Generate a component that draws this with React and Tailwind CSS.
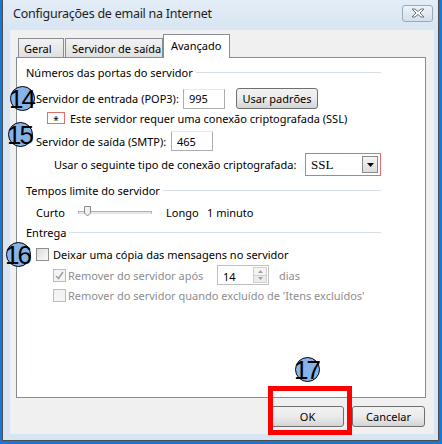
import React from "react";

const font = { fontFamily: '"Noto Sans", "Open Sans", sans-serif' };

const Badge = ({ n, className }) => (
    <div
        className={`absolute w-[25px] h-[25px] rounded-full bg-[#86b4ea] border border-black flex items-center justify-center text-[26px] leading-none text-black tracking-[-2px] ${className}`}
        style={{ fontFamily: '"Liberation Sans", Arial, sans-serif' }}
    >
        <span className="mr-[2px]">{n}</span>
    </div>
);

const Box = ({ checked, disabled }) => (
    <div
        className={`w-[13px] h-[13px] shrink-0 border flex items-center justify-center ${disabled ? "border-[#bcbcbc] bg-[#f4f4f4]" : "border-[#8f8f8f] bg-gradient-to-br from-[#dcdcdc] to-[#fafafa]"}`}
    >
        {checked && (
            <svg width="9" height="9" viewBox="0 0 9 9">
                <path d="M1 5 L3.5 7.5 L8 1" fill="none" stroke="#a0a0a0" strokeWidth="1.6" />
            </svg>
        )}
    </div>
);

const GroupHeader = ({ label, className }) => (
    <div className={`flex items-center h-[16px] pl-[9px] w-[364px] ${className}`}>
        <span className="text-black whitespace-nowrap">{label}</span>
        <div className="flex-1 h-px bg-[#d5dfe5] ml-[3px]" />
    </div>
);

const WinButton = ({ children, className }) => (
    <div
        className={`h-[21px] shrink-0 border border-[#707070] rounded-[3px] bg-gradient-to-b from-[#f2f2f2] via-[#ebebeb] to-[#d4d4d4] flex items-center justify-center text-black ${className}`}
    >
        {children}
    </div>
);

export default function App() {
    return (
        <div className="w-[442px] h-[444px] bg-[#1a78d4] overflow-hidden relative text-[11px] leading-none whitespace-nowrap" style={font}>
            <div className="ml-[2px] w-[437px] h-[441px] border-x border-b border-[#4d4d4d] bg-[#d8e5f2] flex flex-col">
                {/* Title bar */}
                <div className="h-[30px] flex items-center justify-between pl-[10px] pr-[5px] bg-gradient-to-b from-[#e3edf7] to-[#d8e5f2]">
                    <span className="text-[12.5px] tracking-[-0.25px] text-[#1e1e1e] mt-[-1px]">Configurações de email na Internet</span>
                    <div className="w-[31px] h-[17px] mb-[4px] border border-[#9aa8b8] rounded-[3px] bg-gradient-to-b from-[#eef3f8] to-[#d4dfeb] flex items-center justify-center">
                        <svg width="14" height="10" viewBox="0 0 14 10">
                            <path d="M1 1 L4 1 L7 3.5 L10 1 L13 1 L9 5 L13 9 L10 9 L7 6.5 L4 9 L1 9 L5 5 Z" fill="#fff" stroke="#6b7380" strokeWidth="1" strokeLinejoin="round" />
                        </svg>
                    </div>
                </div>

                {/* Body */}
                <div className="ml-[7px] mr-[4px] h-[404px] bg-[#f0f0f0] flex flex-col pl-[6px] pr-[7px] pt-[3px]">
                    {/* Tabs */}
                    <div className="flex items-end h-[24px] pl-[2px]">
                        <div className="h-[19px] px-[5px] border border-b-0 border-[#898c95] bg-gradient-to-b from-[#f2f2f2] to-[#e0e0e0] flex items-center text-black w-[46px]">Geral</div>
                        <div className="h-[19px] ml-[1px] px-[6px] border border-b-0 border-[#898c95] bg-gradient-to-b from-[#f2f2f2] to-[#e0e0e0] flex items-center text-black w-[98px]">Servidor de saída</div>
                        <div className="h-[24px] mb-[-1px] relative z-10 px-[7px] border border-b-0 border-[#898c95] bg-white flex items-center text-black w-[67px] pb-[3px]">Avançado</div>
                    </div>

                    {/* Panel */}
                    <div className="relative w-[410px] h-[341px] border border-[#898c95] bg-white flex flex-col pt-[6px]">
                        <GroupHeader label="Números das portas do servidor" />

                        <div className="flex items-center h-[21px] mt-[8px] pl-[19px]">
                            <span className="text-black w-[147px]">Servidor de entrada (POP3):</span>
                            <div className="w-[42px] h-[20px] border border-[#abadb3] border-t-[#e3e9ef] flex items-center pl-[5px] text-black">995</div>
                            <WinButton className="ml-[11px] w-[82px]">Usar padrões</WinButton>
                        </div>

                        <div className="flex items-center h-[12px] mt-[3px] pl-[30px]">
                            <div className="w-[18px] h-[12px] border border-[#e06f6f] flex items-center justify-center text-[10px] text-black pt-[3px]">*</div>
                            <span className="ml-[5px] text-black">Este servidor requer uma conexão criptografada (SSL)</span>
                        </div>

                        <div className="flex items-center h-[20px] mt-[7px] pl-[19px]">
                            <span className="text-black w-[135px]">Servidor de saída (SMTP):</span>
                            <div className="w-[42px] h-[20px] border border-[#abadb3] border-t-[#e3e9ef] flex items-center pl-[5px] text-black">465</div>
                        </div>

                        <div className="flex items-center h-[23px] mt-[2px] pl-[37px]">
                            <span className="text-black w-[251px]">Usar o seguinte tipo de conexão criptografada:</span>
                            <div className="w-[76px] h-[23px] border-[1.5px] border-[#e06f6f] flex items-center justify-between pl-[5px] pr-[2px]">
                                <span className="text-[13px] text-black" style={{ fontFamily: '"Liberation Serif", serif' }}>SSL</span>
                                <div className="w-[16px] h-[17px] border border-[#8a8a8a] bg-gradient-to-b from-[#f4f4f4] to-[#dcdcdc] flex items-center justify-center">
                                    <svg width="7" height="4" viewBox="0 0 7 4"><path d="M0 0 L7 0 L3.5 4 Z" fill="#000" /></svg>
                                </div>
                            </div>
                        </div>

                        <GroupHeader label="Tempos limite do servidor" className="mt-[6px]" />

                        <div className="flex items-center h-[16px] mt-[6px] pl-[19px]">
                            <span className="text-black w-[42px]">Curto</span>
                            <div className="relative w-[74px] h-[12px] flex items-center">
                                <div className="w-full h-[3px] border border-[#b0b0b0] border-b-[#e6e6e6] bg-[#e7eaea]" />
                                <svg className="absolute left-[6px] top-0" width="7" height="11" viewBox="0 0 7 11">
                                    <path d="M0.5 0.5 H6.5 V7 L3.5 10 L0.5 7 Z" fill="#f0f0f0" stroke="#8a8a8a" />
                                </svg>
                            </div>
                            <span className="ml-[14px] w-[41px] text-black">Longo</span>
                            <span className="text-black">1 minuto</span>
                        </div>

                        <GroupHeader label="Entrega" className="mt-[4px]" />

                        <div className="flex items-center h-[16px] mt-[6px] pl-[19px]">
                            <Box />
                            <span className="ml-[4px] text-black">Deixar uma cópia das mensagens no servidor</span>
                        </div>

                        <div className="flex items-center h-[20px] mt-[3px] pl-[36px]">
                            <Box checked disabled />
                            <span className="ml-[2px] text-[#8d8d8d] w-[149px]">Remover do servidor após</span>
                            <div className="w-[52px] h-[20px] border border-[#c0c0c0] flex items-center justify-between pl-[5px] pr-[1px]">
                                <span className="text-black mt-[2px]">14</span>
                                <div className="flex flex-col w-[14px] h-[16px] border border-[#d0d0d0]">
                                    <div className="flex-1 flex items-center justify-center bg-[#f4f4f4] border-b border-[#d0d0d0]">
                                        <svg width="5" height="3" viewBox="0 0 5 3"><path d="M0 3 L2.5 0 L5 3 Z" fill="#a0a0a0" /></svg>
                                    </div>
                                    <div className="flex-1 flex items-center justify-center bg-[#ececec]">
                                        <svg width="5" height="3" viewBox="0 0 5 3"><path d="M0 0 L5 0 L2.5 3 Z" fill="#a0a0a0" /></svg>
                                    </div>
                                </div>
                            </div>
                            <span className="ml-[10px] text-[#8d8d8d]">dias</span>
                        </div>

                        <div className="flex items-center h-[16px] mt-[2px] pl-[36px]">
                            <Box disabled />
                            <span className="ml-[2px] text-[#8d8d8d]">Remover do servidor quando excluído de 'Itens excluídos'</span>
                        </div>
                    </div>

                    {/* Buttons */}
                    <div className="flex justify-end mt-[8px] pr-[2px] gap-[8px]">
                        <WinButton className="w-[73px]">OK</WinButton>
                        <WinButton className="w-[73px]">Cancelar</WinButton>
                    </div>
                </div>
                <div className="flex-1" />
            </div>

            {/* Annotations */}
            <Badge n="14" className="left-[10px] top-[86px]" />
            <Badge n="15" className="left-[8px] top-[122px]" />
            <Badge n="16" className="left-[6px] top-[242px]" />
            <Badge n="17" className="left-[295px] top-[357px]" />
            <div className="absolute left-[268px] top-[386px] w-[84px] h-[49px] border-[5px] border-[#ff0000]" />
        </div>
    );
}
